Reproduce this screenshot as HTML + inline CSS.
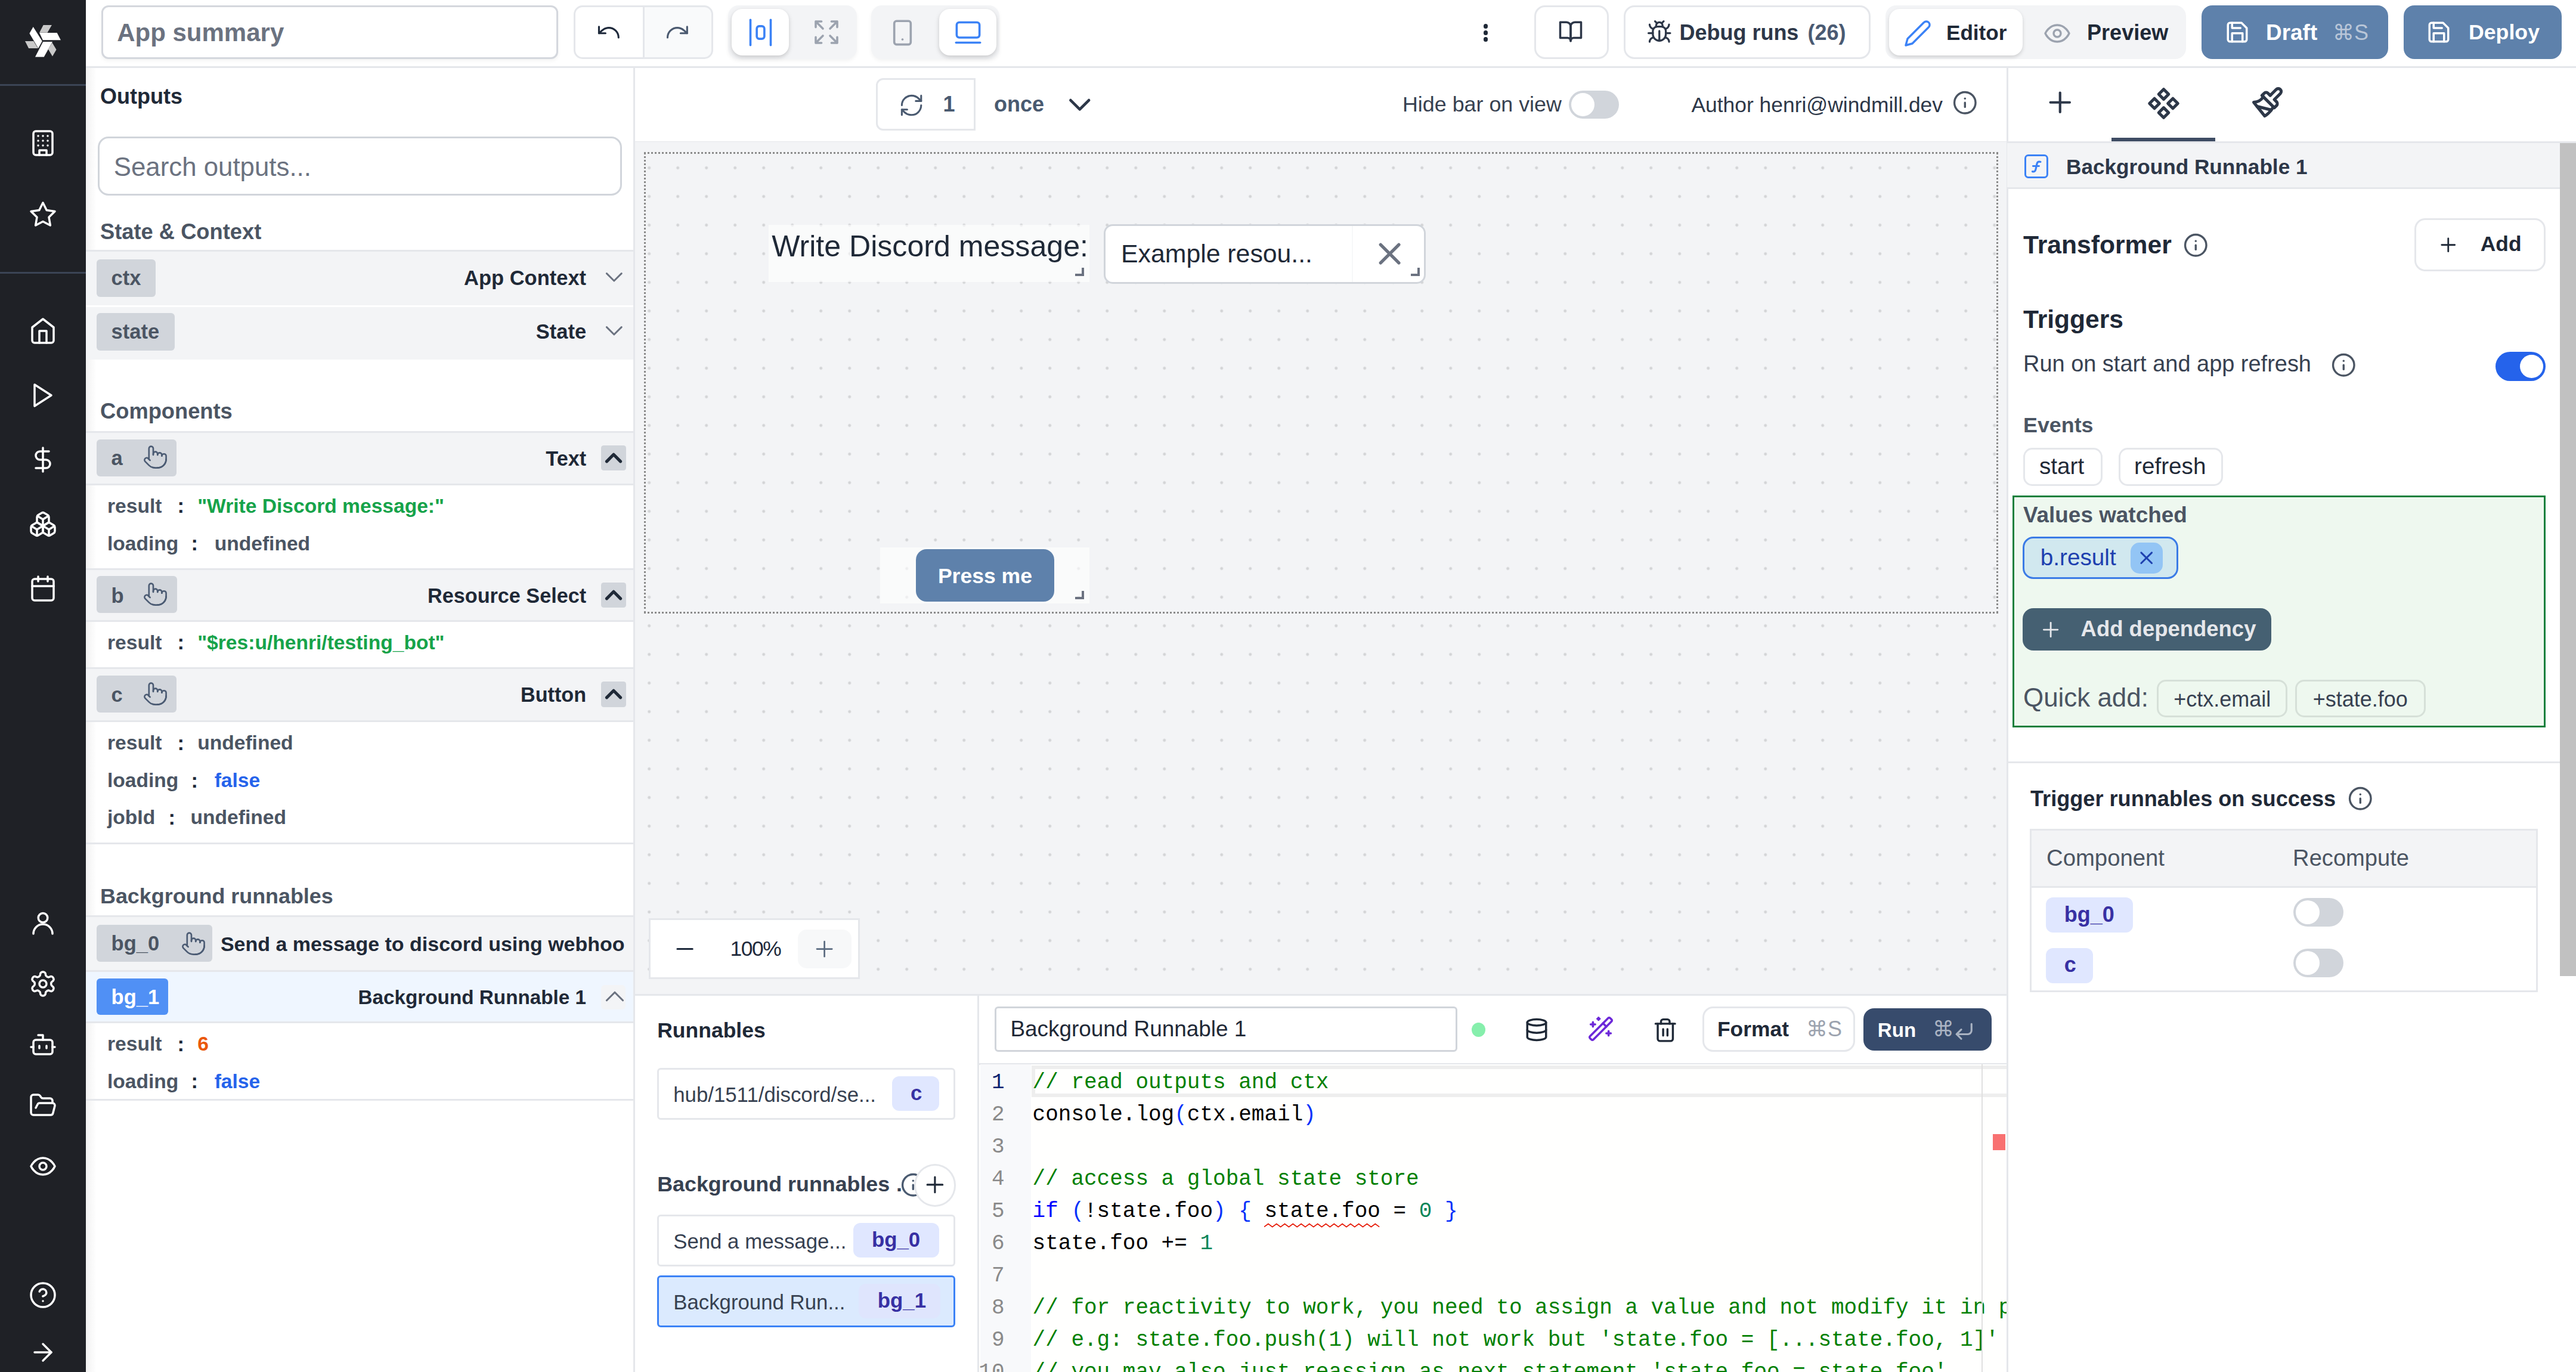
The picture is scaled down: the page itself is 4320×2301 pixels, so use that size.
<!DOCTYPE html>
<html><head><meta charset="utf-8">
<style>
html,body{margin:0;padding:0;background:#fff;overflow:hidden}
#root{position:relative;width:1440px;height:767px;zoom:3;overflow:hidden;font-family:"Liberation Sans",sans-serif;color:#1f2937;background:#fff}
.a{position:absolute}
.t{position:absolute;white-space:nowrap;line-height:1}
.b{font-weight:700}
svg.i{position:absolute;fill:none;stroke:currentColor;stroke-width:2;stroke-linecap:round;stroke-linejoin:round}
.mono{font-family:"Liberation Mono",monospace}
@media (max-width:2200px){#root{zoom:1}}
</style></head><body>
<div id="root">
<div class="a" style="left:0;top:0;width:48px;height:767px;background:#1f2126"></div>
<!-- logo -->
<svg class="a" style="left:0;top:0;width:48px;height:48px" viewBox="0 0 48 48">
 <polygon points="24.22,14.01 28.96,14.01 26.5,18.29 22.03,18.29" fill="#c9c9c9"/>
 <polygon points="22.03,18.35 31.87,18.35 33.97,22.39 23.94,22.39" fill="#fff"/>
 <polygon points="18.57,15.01 23.58,23.03 21.39,27.04 16.47,18.66" fill="#fff"/>
 <polygon points="14.01,23.03 18.75,23.03 21.21,27.04 16.02,27.04" fill="#c9c9c9"/>
 <polygon points="24.04,23.31 29.32,23.31 24.58,31.87 19.66,31.87" fill="#fff"/>
 <polygon points="29.14,23.85 31.51,27.77 29.32,31.51 26.95,27.5" fill="#c9c9c9"/>
</svg>
<div class="a" style="left:0;top:47px;width:48px;height:1px;background:#3b4455"></div>
<div class="a" style="left:0;top:152px;width:48px;height:1px;background:#3b4455"></div>
<svg class="i" style="left:16px;top:72px;width:16px;height:16px;color:#fff;stroke-width:1.75" viewBox="0 0 24 24"><rect width="16" height="20" x="4" y="2" rx="2" ry="2"/><path d="M9 22v-4h6v4"/><path d="M8 6h.01"/><path d="M16 6h.01"/><path d="M12 6h.01"/><path d="M12 10h.01"/><path d="M12 14h.01"/><path d="M16 10h.01"/><path d="M16 14h.01"/><path d="M8 10h.01"/><path d="M8 14h.01"/></svg>
<svg class="i" style="left:16px;top:112px;width:16px;height:16px;color:#fff;stroke-width:1.75" viewBox="0 0 24 24"><polygon points="12 2 15.09 8.26 22 9.27 17 14.14 18.18 21.02 12 17.77 5.82 21.02 7 14.14 2 9.27 8.91 8.26 12 2"/></svg>
<svg class="i" style="left:16px;top:177px;width:16px;height:16px;color:#fff;stroke-width:1.75" viewBox="0 0 24 24"><path d="m3 9 9-7 9 7v11a2 2 0 0 1-2 2H5a2 2 0 0 1-2-2z"/><polyline points="9 22 9 12 15 12 15 22"/></svg>
<svg class="i" style="left:16px;top:213px;width:16px;height:16px;color:#fff;stroke-width:1.75" viewBox="0 0 24 24"><polygon points="5 3 19 12 5 21 5 3"/></svg>
<svg class="i" style="left:16px;top:249px;width:16px;height:16px;color:#fff;stroke-width:1.75" viewBox="0 0 24 24"><line x1="12" x2="12" y1="2" y2="22"/><path d="M17 5H9.5a3.5 3.5 0 0 0 0 7h5a3.5 3.5 0 0 1 0 7H6"/></svg>
<svg class="i" style="left:16px;top:285px;width:16px;height:16px;color:#fff;stroke-width:1.75" viewBox="0 0 24 24"><path d="M2.97 12.92A2 2 0 0 0 2 14.63v3.24a2 2 0 0 0 .97 1.71l3 1.8a2 2 0 0 0 2.06 0L12 19v-5.5l-5-3-4.03 2.42Z"/><path d="m7 16.5-4.74-2.85"/><path d="m7 16.5 5-3"/><path d="M7 16.5v5.17"/><path d="M12 13.5V19l3.97 2.38a2 2 0 0 0 2.06 0l3-1.8a2 2 0 0 0 .97-1.71v-3.24a2 2 0 0 0-.97-1.71L17 10.5l-5 3Z"/><path d="m17 16.5-5-3"/><path d="m17 16.5 4.74-2.85"/><path d="M17 16.5v5.17"/><path d="M7.97 4.42A2 2 0 0 0 7 6.13v4.37l5 3 5-3V6.13a2 2 0 0 0-.97-1.71l-3-1.8a2 2 0 0 0-2.06 0l-3 1.8Z"/><path d="M12 8 7.26 5.15"/><path d="m12 8 4.74-2.85"/><path d="M12 13.5V8"/></svg>
<svg class="i" style="left:16px;top:321px;width:16px;height:16px;color:#fff;stroke-width:1.75" viewBox="0 0 24 24"><rect width="18" height="18" x="3" y="4" rx="2" ry="2"/><line x1="16" x2="16" y1="2" y2="6"/><line x1="8" x2="8" y1="2" y2="6"/><line x1="3" x2="21" y1="10" y2="10"/></svg>
<svg class="i" style="left:16px;top:508px;width:16px;height:16px;color:#fff;stroke-width:1.75" viewBox="0 0 24 24"><circle cx="12" cy="7.6" r="3.9"/><path d="M20 21a8 8 0 0 0-16 0"/></svg>
<svg class="i" style="left:16px;top:542px;width:16px;height:16px;color:#fff;stroke-width:1.75" viewBox="0 0 24 24"><path d="M12.22 2h-.44a2 2 0 0 0-2 2v.18a2 2 0 0 1-1 1.73l-.43.25a2 2 0 0 1-2 0l-.15-.08a2 2 0 0 0-2.73.73l-.22.38a2 2 0 0 0 .73 2.73l.15.1a2 2 0 0 1 1 1.72v.51a2 2 0 0 1-1 1.74l-.15.09a2 2 0 0 0-.73 2.73l.22.38a2 2 0 0 0 2.73.73l.15-.08a2 2 0 0 1 2 0l.43.25a2 2 0 0 1 1 1.73V20a2 2 0 0 0 2 2h.44a2 2 0 0 0 2-2v-.18a2 2 0 0 1 1-1.73l.43-.25a2 2 0 0 1 2 0l.15.08a2 2 0 0 0 2.73-.73l.22-.39a2 2 0 0 0-.73-2.73l-.15-.08a2 2 0 0 1-1-1.74v-.5a2 2 0 0 1 1-1.74l.15-.09a2 2 0 0 0 .73-2.73l-.22-.38a2 2 0 0 0-2.73-.73l-.15.08a2 2 0 0 1-2 0l-.43-.25a2 2 0 0 1-1-1.73V4a2 2 0 0 0-2-2z"/><circle cx="12" cy="12" r="3"/></svg>
<svg class="i" style="left:16px;top:576px;width:16px;height:16px;color:#fff;stroke-width:1.75" viewBox="0 0 24 24"><path d="M12 8V4H8"/><rect width="16" height="12" x="4" y="8" rx="2"/><path d="M2 14h2"/><path d="M20 14h2"/><path d="M15 13v2"/><path d="M9 13v2"/></svg>
<svg class="i" style="left:16px;top:610px;width:16px;height:16px;color:#fff;stroke-width:1.75" viewBox="0 0 24 24"><path d="m6 14 1.5-2.9A2 2 0 0 1 9.24 10H20a2 2 0 0 1 1.94 2.5l-1.54 6a2 2 0 0 1-1.95 1.5H4a2 2 0 0 1-2-2V5a2 2 0 0 1 2-2h3.9a2 2 0 0 1 1.69.9l.81 1.2a2 2 0 0 0 1.67.9H18a2 2 0 0 1 2 2v2"/></svg>
<svg class="i" style="left:16px;top:644px;width:16px;height:16px;color:#fff;stroke-width:1.75" viewBox="0 0 24 24"><path d="M2 12s3-7 10-7 10 7 10 7-3 7-10 7-10-7-10-7Z"/><circle cx="12" cy="12" r="3"/></svg>
<svg class="i" style="left:16px;top:716px;width:16px;height:16px;color:#fff;stroke-width:1.75" viewBox="0 0 24 24"><circle cx="12" cy="12" r="10"/><path d="M9.09 9a3 3 0 0 1 5.83 1c0 2-3 3-3 3"/><path d="M12 17h.01"/></svg>
<svg class="i" style="left:16px;top:748px;width:16px;height:16px;color:#fff;stroke-width:1.75" viewBox="0 0 24 24"><path d="M5 12h14"/><path d="m12 5 7 7-7 7"/></svg>

<div class="a" style="left:48px;top:0;width:1392px;height:37px;background:#fff;border-bottom:1px solid #e5e7eb"></div>
<!-- app summary -->
<div class="a" style="left:56.5px;top:3px;width:253.5px;height:28px;border:1px solid #d4d7dd;border-radius:4px;background:#fff;box-shadow:0 1px 2px rgba(0,0,0,.05)"></div>
<div class="t b" style="left:65.4px;top:11.3px;font-size:14px;color:#6b7280">App summary</div>
<!-- undo/redo -->
<div class="a" style="left:320.7px;top:3px;width:76px;height:28px;border:1px solid #e5e7eb;border-radius:5px;background:linear-gradient(90deg,#fff 50%,#f9fafb 50%)"></div>
<div class="a" style="left:359.3px;top:4px;width:1px;height:28px;background:#e5e7eb"></div>
<svg class="i" style="left:332.9px;top:10.7px;width:14.6px;height:14.6px;color:#1e293b;stroke-width:1.7" viewBox="0 0 24 24"><path d="M3 7v6h6"/><path d="M21 17a9 9 0 0 0-9-9 9 9 0 0 0-6 2.3L3 13"/></svg>
<svg class="i" style="left:371.4px;top:10.7px;width:14.6px;height:14.6px;color:#4b5a70;stroke-width:1.7" viewBox="0 0 24 24"><path d="M21 7v6h-6"/><path d="M3 17a9 9 0 0 1 9-9 9 9 0 0 1 6 2.3l3 2.7"/></svg>
<!-- layout toggle -->
<div class="a" style="left:407px;top:3px;width:72px;height:30px;border-radius:6px;background:#f3f4f6;box-shadow:0 1px 2px rgba(0,0,0,.05)"></div>
<div class="a" style="left:409px;top:5px;width:32px;height:26px;border-radius:6px;background:#fff;box-shadow:0 1px 3px rgba(0,0,0,.13),0 1px 2px rgba(0,0,0,.06)"></div>
<svg class="i" style="left:416.5px;top:9.5px;width:17px;height:17px;color:#3b82f6;stroke-width:1.7" viewBox="0 0 24 24"><rect width="6" height="10" x="9" y="7" rx="2"/><path d="M4 22V2"/><path d="M20 22V2"/></svg>
<svg class="i" style="left:454px;top:10px;width:16px;height:16px;color:#9ca3af;stroke-width:1.8" viewBox="0 0 24 24"><path d="m21 21-6-6m6 6v-4.8m0 4.8h-4.8"/><path d="M3 16.2V21m0 0h4.8M3 21l6-6"/><path d="M21 7.8V3m0 0h-4.8M21 3l-6 6"/><path d="M3 7.8V3m0 0h4.8M3 3l6 6"/></svg>
<!-- device toggle -->
<div class="a" style="left:487px;top:3px;width:71.5px;height:30px;border-radius:6px;background:#f3f4f6;box-shadow:0 1px 2px rgba(0,0,0,.05)"></div>
<div class="a" style="left:525px;top:5px;width:32px;height:26px;border-radius:6px;background:#fff;box-shadow:0 1px 3px rgba(0,0,0,.13),0 1px 2px rgba(0,0,0,.06)"></div>
<svg class="i" style="left:496px;top:10px;width:17px;height:17px;color:#9ca3af;stroke-width:1.7" viewBox="0 0 24 24"><rect width="13" height="18.5" x="5.5" y="2.5" rx="1.8" ry="1.8"/><path d="M12 17h.01"/></svg>
<svg class="i" style="left:532.5px;top:9.5px;width:17px;height:17px;color:#3b82f6;stroke-width:1.7" viewBox="0 0 24 24"><rect width="18" height="12" x="3" y="4" rx="2" ry="2"/><line x1="2.5" x2="21.5" y1="20" y2="20"/></svg>
<!-- kebab -->
<div class="a" style="left:829.2px;top:13.3px;width:2.6px;height:2.6px;border-radius:50%;background:#1f2937"></div>
<div class="a" style="left:829.2px;top:17px;width:2.6px;height:2.6px;border-radius:50%;background:#1f2937"></div>
<div class="a" style="left:829.2px;top:20.7px;width:2.6px;height:2.6px;border-radius:50%;background:#1f2937"></div>
<!-- book -->
<div class="a" style="left:857.7px;top:3px;width:39.5px;height:28px;border:1px solid #e5e7eb;border-radius:6px;background:#fff"></div>
<svg class="i" style="left:871px;top:10.6px;width:14px;height:14px;color:#2d3748;stroke-width:2" viewBox="0 0 24 24"><path d="M2 3h6a4 4 0 0 1 4 4v14a3 3 0 0 0-3-3H2z"/><path d="M22 3h-6a4 4 0 0 0-4 4v14a3 3 0 0 1 3-3h7z"/></svg>
<!-- debug runs -->
<div class="a" style="left:907.8px;top:3px;width:136px;height:28px;border:1px solid #e5e7eb;border-radius:6px;background:#fff"></div>
<svg class="i" style="left:920.3px;top:10.8px;width:14.5px;height:14.5px;color:#2d3748;stroke-width:1.8" viewBox="0 0 24 24"><path d="m8 2 1.88 1.88"/><path d="M14.12 3.88 16 2"/><path d="M9 7.13v-1a3.003 3.003 0 1 1 6 0v1"/><path d="M12 20c-3.3 0-6-2.7-6-6v-3a4 4 0 0 1 4-4h4a4 4 0 0 1 4 4v3c0 3.3-2.7 6-6 6"/><path d="M12 20v-9"/><path d="M6.53 9C4.6 8.8 3 7.1 3 5"/><path d="M6 13H2"/><path d="M3 21c0-2.1 1.7-3.9 3.8-4"/><path d="M20.97 5c0 2.1-1.6 3.8-3.5 4"/><path d="M22 13h-4"/><path d="M17.2 17c2.1.1 3.8 1.9 3.8 4"/></svg>
<div class="t b" style="left:938.8px;top:12.2px;font-size:12px;color:#2d3748">Debug runs</div>
<div class="t b" style="left:1010.5px;top:12.2px;font-size:12px;color:#4a5a72">(26)</div>
<!-- editor/preview -->
<div class="a" style="left:1054px;top:3px;width:168px;height:30px;border-radius:6px;background:#f3f4f6"></div>
<div class="a" style="left:1056px;top:5px;width:74.5px;height:26px;border-radius:6px;background:#fff;box-shadow:0 1px 2px rgba(0,0,0,.15)"></div>
<svg class="i" style="left:1064px;top:10.5px;width:16px;height:16px;color:#3b82f6;stroke-width:1.7" viewBox="0 0 24 24"><path d="M17 3a2.85 2.83 0 1 1 4 4L7.5 20.5 2 22l1.5-5.5Z"/></svg>
<div class="t b" style="left:1088px;top:12.4px;font-size:11.7px;color:#1f2937">Editor</div>
<svg class="i" style="left:1142px;top:10.5px;width:16px;height:16px;color:#9ca3af;stroke-width:1.7" viewBox="0 0 24 24"><path d="M2 12s3-7 10-7 10 7 10 7-3 7-10 7-10-7-10-7Z"/><circle cx="12" cy="12" r="3"/></svg>
<div class="t b" style="left:1166.7px;top:12.4px;font-size:12px;color:#1f2937">Preview</div>
<!-- draft -->
<div class="a" style="left:1230.5px;top:3px;width:104.5px;height:30px;border-radius:6px;background:#5e81ab"></div>
<svg class="i" style="left:1243.5px;top:11px;width:14px;height:14px;color:#fff;stroke-width:2" viewBox="0 0 24 24"><path d="M19 21H5a2 2 0 0 1-2-2V5a2 2 0 0 1 2-2h11l5 5v11a2 2 0 0 1-2 2z"/><polyline points="17 21 17 13 7 13 7 21"/><polyline points="7 3 7 8 15 8"/></svg>
<div class="t b" style="left:1266.7px;top:12.4px;font-size:12.3px;color:#fff">Draft</div>
<div class="t" style="left:1304px;top:12.4px;font-size:12px;color:#b9c6d8">&#8984;S</div>
<!-- deploy -->
<div class="a" style="left:1343.6px;top:3px;width:88.4px;height:30px;border-radius:6px;background:#5e81ab"></div>
<svg class="i" style="left:1356.2px;top:11px;width:14px;height:14px;color:#fff;stroke-width:2" viewBox="0 0 24 24"><path d="M19 21H5a2 2 0 0 1-2-2V5a2 2 0 0 1 2-2h11l5 5v11a2 2 0 0 1-2 2z"/><polyline points="17 21 17 13 7 13 7 21"/><polyline points="7 3 7 8 15 8"/></svg>
<div class="t b" style="left:1380px;top:12.4px;font-size:11.9px;color:#fff">Deploy</div>

<div class="a" style="left:48px;top:38px;width:306px;height:729px;background:#fff;border-right:1px solid #e5e7eb"></div>
<!-- left panel content -->
<div class="a" style="left:48.00px;top:38.00px;width:6.00px;height:729.00px;background:linear-gradient(90deg,rgba(0,0,0,.05),rgba(0,0,0,0))"></div>
<div class="t b" style="left:56.00px;top:47.84px;font-size:12px;color:#1f2937;">Outputs</div>
<div class="a" style="left:54.50px;top:76.30px;width:291.00px;height:31.20px;border:1px solid #d1d5db;border-radius:6px;background:#fff"></div>
<div class="t" style="left:63.60px;top:86.14px;font-size:14.6px;color:#6b7280;">Search outputs...</div>
<div class="t b" style="left:56.00px;top:123.76px;font-size:12.1px;color:#4b5563;">State &amp; Context</div>
<div class="a" style="left:48.00px;top:139.50px;width:306.00px;height:30.00px;background:#f3f4f6;border-top:1px solid #e5e7eb"></div>
<div class="a" style="left:48.00px;top:170.50px;width:306.00px;height:29.50px;background:#f3f4f6;border-top:1px solid #fff"></div>
<div class="a" style="left:54.00px;top:145.00px;width:33.00px;height:21.00px;background:#d1d5db;border-radius:2px"></div>
<div class="t b" style="left:62.20px;top:149.57px;font-size:11.5px;color:#4b5563;">ctx</div>
<div class="t b" style="right:1112.30px;top:149.57px;font-size:11.5px;color:#1f2937;">App Context</div>
<svg class="i" style="left:334.86px;top:146.79px;width:16.56px;height:16.56px;color:#6b7280;stroke-width:1.4" viewBox="0 0 24 24"><path d="m6 9 6 6 6-6"/></svg>
<div class="a" style="left:54.00px;top:175.00px;width:43.80px;height:21.00px;background:#d1d5db;border-radius:2px"></div>
<div class="t b" style="left:62.20px;top:179.57px;font-size:11.5px;color:#4b5563;">state</div>
<div class="t b" style="right:1112.30px;top:179.57px;font-size:11.5px;color:#1f2937;">State</div>
<svg class="i" style="left:334.86px;top:176.79px;width:16.56px;height:16.56px;color:#6b7280;stroke-width:1.4" viewBox="0 0 24 24"><path d="m6 9 6 6 6-6"/></svg>
<div class="t b" style="left:56.00px;top:224.06px;font-size:12.1px;color:#4b5563;">Components</div>
<div class="a" style="left:48.00px;top:240.90px;width:306.00px;height:30.60px;background:#f3f4f6;border-top:1px solid #e5e7eb;border-bottom:1px solid #e5e7eb;box-sizing:border-box"></div>
<div class="a" style="left:54.00px;top:245.50px;width:44.50px;height:20.70px;background:#d1d5db;border-radius:2px"></div>
<div class="t b" style="left:62.20px;top:250.47px;font-size:11.5px;color:#4b5563;">a</div>
<svg class="i" style="left:79.56px;top:248.40px;width:14.40px;height:14.40px;color:#4b5b73;stroke-width:1.45" viewBox="0 0 24 24"><path d="M22 14a8 8 0 0 1-8 8"/><path d="M18 11v-1a2 2 0 0 0-2-2a2 2 0 0 0-2 2"/><path d="M14 10V9a2 2 0 0 0-2-2a2 2 0 0 0-2 2v1"/><path d="M10 9.5V4a2 2 0 0 0-2-2a2 2 0 0 0-2 2v10"/><path d="M18 11a2 2 0 1 1 4 0v3a8 8 0 0 1-8 8h-2c-2.8 0-4.5-.86-5.99-2.34l-3.6-3.6a2 2 0 0 1 2.83-2.82L7 15"/></svg>
<div class="t b" style="right:1112.30px;top:250.55px;font-size:11.4px;color:#1f2937;">Text</div>
<div class="a" style="left:336.00px;top:249.00px;width:14.00px;height:14.10px;background:#d1d5db;border-radius:1.5px"></div>
<svg class="i" style="left:335.3px;top:248.30px;width:15.36px;height:15.36px;color:#1f2937;stroke-width:2.7" viewBox="0 0 24 24"><path d="m18 15-6-6-6 6"/></svg>
<div class="t b" style="left:60.00px;top:277.32px;font-size:11.2px;color:#4b5563;">result</div>
<div class="t b" style="left:99.20px;top:277.07px;font-size:11.5px;color:#1f2937;">:</div>
<div class="t b" style="left:110.40px;top:277.32px;font-size:11.2px;color:#16a34a;">"Write Discord message:"</div>
<div class="t b" style="left:60.00px;top:298.22px;font-size:11.2px;color:#4b5563;">loading</div>
<div class="t b" style="left:106.80px;top:297.97px;font-size:11.5px;color:#1f2937;">:</div>
<div class="t b" style="left:119.90px;top:298.22px;font-size:11.2px;color:#4b5563;">undefined</div>
<div class="a" style="left:48.00px;top:317.50px;width:306.00px;height:30.10px;background:#f3f4f6;border-top:1px solid #e5e7eb;border-bottom:1px solid #e5e7eb;box-sizing:border-box"></div>
<div class="a" style="left:54.00px;top:322.10px;width:44.90px;height:20.70px;background:#d1d5db;border-radius:2px"></div>
<div class="t b" style="left:62.20px;top:327.27px;font-size:11.5px;color:#4b5563;">b</div>
<svg class="i" style="left:79.56px;top:325.00px;width:14.40px;height:14.40px;color:#4b5b73;stroke-width:1.45" viewBox="0 0 24 24"><path d="M22 14a8 8 0 0 1-8 8"/><path d="M18 11v-1a2 2 0 0 0-2-2a2 2 0 0 0-2 2"/><path d="M14 10V9a2 2 0 0 0-2-2a2 2 0 0 0-2 2v1"/><path d="M10 9.5V4a2 2 0 0 0-2-2a2 2 0 0 0-2 2v10"/><path d="M18 11a2 2 0 1 1 4 0v3a8 8 0 0 1-8 8h-2c-2.8 0-4.5-.86-5.99-2.34l-3.6-3.6a2 2 0 0 1 2.83-2.82L7 15"/></svg>
<div class="t b" style="right:1112.30px;top:327.35px;font-size:11.4px;color:#1f2937;">Resource Select</div>
<div class="a" style="left:336.00px;top:325.60px;width:14.00px;height:14.10px;background:#d1d5db;border-radius:1.5px"></div>
<svg class="i" style="left:335.3px;top:324.90px;width:15.36px;height:15.36px;color:#1f2937;stroke-width:2.7" viewBox="0 0 24 24"><path d="m18 15-6-6-6 6"/></svg>
<div class="t b" style="left:60.00px;top:353.52px;font-size:11.2px;color:#4b5563;">result</div>
<div class="t b" style="left:99.20px;top:353.27px;font-size:11.5px;color:#1f2937;">:</div>
<div class="t b" style="left:110.40px;top:353.52px;font-size:11.2px;color:#16a34a;">"$res:u/henri/testing_bot"</div>
<div class="a" style="left:48.00px;top:373.00px;width:306.00px;height:30.80px;background:#f3f4f6;border-top:1px solid #e5e7eb;border-bottom:1px solid #e5e7eb;box-sizing:border-box"></div>
<div class="a" style="left:54.00px;top:377.60px;width:44.50px;height:20.70px;background:#d1d5db;border-radius:2px"></div>
<div class="t b" style="left:62.20px;top:382.67px;font-size:11.5px;color:#4b5563;">c</div>
<svg class="i" style="left:79.56px;top:380.50px;width:14.40px;height:14.40px;color:#4b5b73;stroke-width:1.45" viewBox="0 0 24 24"><path d="M22 14a8 8 0 0 1-8 8"/><path d="M18 11v-1a2 2 0 0 0-2-2a2 2 0 0 0-2 2"/><path d="M14 10V9a2 2 0 0 0-2-2a2 2 0 0 0-2 2v1"/><path d="M10 9.5V4a2 2 0 0 0-2-2a2 2 0 0 0-2 2v10"/><path d="M18 11a2 2 0 1 1 4 0v3a8 8 0 0 1-8 8h-2c-2.8 0-4.5-.86-5.99-2.34l-3.6-3.6a2 2 0 0 1 2.83-2.82L7 15"/></svg>
<div class="t b" style="right:1112.30px;top:382.75px;font-size:11.4px;color:#1f2937;">Button</div>
<div class="a" style="left:336.00px;top:381.10px;width:14.00px;height:14.10px;background:#d1d5db;border-radius:1.5px"></div>
<svg class="i" style="left:335.3px;top:380.40px;width:15.36px;height:15.36px;color:#1f2937;stroke-width:2.7" viewBox="0 0 24 24"><path d="m18 15-6-6-6 6"/></svg>
<div class="t b" style="left:60.00px;top:409.82px;font-size:11.2px;color:#4b5563;">result</div>
<div class="t b" style="left:99.20px;top:409.57px;font-size:11.5px;color:#1f2937;">:</div>
<div class="t b" style="left:110.40px;top:409.82px;font-size:11.2px;color:#4b5563;">undefined</div>
<div class="t b" style="left:60.00px;top:430.82px;font-size:11.2px;color:#4b5563;">loading</div>
<div class="t b" style="left:106.80px;top:430.57px;font-size:11.5px;color:#1f2937;">:</div>
<div class="t b" style="left:119.90px;top:430.82px;font-size:11.2px;color:#2563eb;">false</div>
<div class="t b" style="left:60.00px;top:451.42px;font-size:11.2px;color:#4b5563;">jobId</div>
<div class="t b" style="left:94.20px;top:451.17px;font-size:11.5px;color:#1f2937;">:</div>
<div class="t b" style="left:106.50px;top:451.42px;font-size:11.2px;color:#4b5563;">undefined</div>
<div class="a" style="left:48.00px;top:471.00px;width:306.00px;height:1.00px;background:#e5e7eb"></div>
<div class="t b" style="left:56.00px;top:495.48px;font-size:11.96px;color:#4b5563;">Background runnables</div>
<div class="a" style="left:48.00px;top:511.80px;width:306.00px;height:30.40px;background:#f3f4f6;border-top:1px solid #e5e7eb;box-sizing:border-box"></div>
<div class="a" style="left:54.00px;top:517.00px;width:64.80px;height:20.70px;background:#d1d5db;border-radius:2px"></div>
<div class="t b" style="left:62.20px;top:521.77px;font-size:11.5px;color:#4b5563;">bg_0</div>
<svg class="i" style="left:100.96px;top:520.20px;width:14.40px;height:14.40px;color:#4b5b73;stroke-width:1.45" viewBox="0 0 24 24"><path d="M22 14a8 8 0 0 1-8 8"/><path d="M18 11v-1a2 2 0 0 0-2-2a2 2 0 0 0-2 2"/><path d="M14 10V9a2 2 0 0 0-2-2a2 2 0 0 0-2 2v1"/><path d="M10 9.5V4a2 2 0 0 0-2-2a2 2 0 0 0-2 2v10"/><path d="M18 11a2 2 0 1 1 4 0v3a8 8 0 0 1-8 8h-2c-2.8 0-4.5-.86-5.99-2.34l-3.6-3.6a2 2 0 0 1 2.83-2.82L7 15"/></svg>
<div class="a" style="left:123.3px;top:511px;width:226px;height:30px;overflow:hidden"><div class="t b" style="left:0.00px;top:10.91px;font-size:11.33px;color:#1f2937;">Send a message to discord using webhook</div>
</div>
<div class="a" style="left:48.00px;top:542.20px;width:306.00px;height:29.80px;background:#eff6ff;border-top:1px solid #e5e7eb;border-bottom:1px solid #e5e7eb;box-sizing:border-box"></div>
<div class="a" style="left:54.00px;top:546.90px;width:39.90px;height:20.50px;background:#5090f5;border-radius:2px"></div>
<div class="t b" style="left:62.20px;top:551.77px;font-size:11.5px;color:#fff;">bg_1</div>
<div class="t b" style="right:1112.30px;top:552.11px;font-size:11.09px;color:#1f2937;">Background Runnable 1</div>
<div class="a" style="left:336.00px;top:550.50px;width:13.80px;height:13.70px;background:#f3f4f6;border-radius:2px"></div>
<svg class="i" style="left:334.80px;top:547.85px;width:18.00px;height:18.00px;color:#6b7280;stroke-width:1.4" viewBox="0 0 24 24"><path d="m18 15-6-6-6 6"/></svg>
<div class="t b" style="left:60.00px;top:578.12px;font-size:11.2px;color:#4b5563;">result</div>
<div class="t b" style="left:99.20px;top:577.87px;font-size:11.5px;color:#1f2937;">:</div>
<div class="t b" style="left:110.40px;top:578.12px;font-size:11.2px;color:#ea580c;">6</div>
<div class="t b" style="left:60.00px;top:599.02px;font-size:11.2px;color:#4b5563;">loading</div>
<div class="t b" style="left:106.80px;top:598.77px;font-size:11.5px;color:#1f2937;">:</div>
<div class="t b" style="left:119.90px;top:599.02px;font-size:11.2px;color:#2563eb;">false</div>
<div class="a" style="left:48.00px;top:614.30px;width:306.00px;height:1.00px;background:#e5e7eb"></div>
<!-- ============ CENTER ============ -->
<div class="a" style="left:355.00px;top:38.00px;width:767.00px;height:41.00px;background:#fff;border-bottom:1px solid #e5e7eb"></div>
<div class="a" style="left:489.60px;top:43.70px;width:55.80px;height:29.30px;border:1px solid #e5e7eb;border-radius:4px 0 0 4px;box-sizing:border-box;background:#fff"></div>
<svg class="i" style="left:502.30px;top:51.50px;width:14.40px;height:14.40px;color:#4a5a70;stroke-width:1.7;" viewBox="0 0 24 24"><path d="M3 12a9 9 0 0 1 9-9 9.75 9.75 0 0 1 6.74 2.74L21 8"/><path d="M21 3v5h-5"/><path d="M21 12a9 9 0 0 1-9 9 9.75 9.75 0 0 1-6.74-2.74L3 16"/><path d="M8 16H3v5"/></svg>
<div class="t b" style="left:527.20px;top:52.34px;font-size:12px;color:#4a5a70;">1</div>
<div class="t b" style="left:555.70px;top:52.34px;font-size:12px;color:#4a5a70;">once</div>
<svg class="i" style="left:593.20px;top:48.20px;width:20.50px;height:20.50px;color:#2d3748;stroke-width:1.8;" viewBox="0 0 24 24"><path d="m6 9 6 6 6-6"/></svg>
<div class="t" style="left:784.00px;top:52.78px;font-size:11.95px;color:#374151;">Hide bar on view</div>
<div class="a" style="left:877.00px;top:50.60px;width:28.00px;height:15.80px;background:#d1d5db;border-radius:8px"></div>
<div class="a" style="left:878.30px;top:51.90px;width:13.20px;height:13.20px;background:#fff;border-radius:50%;box-shadow:0 0 0 0.3px #d1d5db"></div>
<div class="t" style="left:945.50px;top:52.91px;font-size:11.8px;color:#2d3748;">Author henri@windmill.dev</div>
<svg class="i" style="left:1091.40px;top:50.40px;width:14.20px;height:14.20px;color:#4b5563;stroke-width:1.9;" viewBox="0 0 24 24"><circle cx="12" cy="12" r="10"/><path d="M12 16v-4"/><path d="M12 8h.01"/></svg>
<div class="a" style="left:355.00px;top:79.40px;width:767.00px;height:476.60px;background-color:#f3f4f6;background-image:radial-gradient(circle at 8px 8px,#d3d4d6 0.65px,rgba(0,0,0,0) 1.0px);background-size:16px 16px;background-position:-0.1px 6.5px"></div>
<div class="a" style="left:360.00px;top:85.00px;width:757.00px;height:258.00px;border:1px dotted #8a8a8a;box-sizing:border-box"></div>
<div class="a" style="left:429.70px;top:125.80px;width:179.30px;height:31.90px;background:rgba(255,255,255,0.6)"></div>
<div class="t" style="right:831.70px;top:129.36px;font-size:16.7px;color:#1f2937;">Write Discord message:</div>
<div class="a" style="left:604.60px;top:149.80px;width:1.40px;height:4.70px;background:#6b7280"></div>
<div class="a" style="left:601.00px;top:153.10px;width:5.00px;height:1.40px;background:#6b7280"></div>
<div class="a" style="left:617.00px;top:125.30px;width:180.00px;height:33.30px;border:1px solid #d1d5db;border-radius:5px;background:#fff;box-sizing:border-box"></div>
<div class="t" style="left:626.70px;top:134.73px;font-size:14.26px;color:#1f2937;">Example resou...</div>
<div class="a" style="left:755.80px;top:126.30px;width:0.40px;height:31.30px;background:#f7f8f9"></div>
<svg class="i" style="left:766.55px;top:131.70px;width:20.40px;height:20.40px;color:#6b7280;stroke-width:2.1;" viewBox="0 0 24 24"><path d="M18 6 6 18"/><path d="m6 6 12 12"/></svg>
<div class="a" style="left:792.40px;top:149.80px;width:1.40px;height:4.70px;background:#6b7280"></div>
<div class="a" style="left:788.80px;top:153.10px;width:5.00px;height:1.40px;background:#6b7280"></div>
<div class="a" style="left:492.00px;top:305.90px;width:117.00px;height:31.60px;background:rgba(255,255,255,0.6)"></div>
<div class="a" style="left:512.00px;top:306.90px;width:77.40px;height:29.60px;background:#5e81ab;border-radius:6px"></div>
<div class="t b" style="left:524.30px;top:316.27px;font-size:11.85px;color:#fff;">Press me</div>
<div class="a" style="left:604.60px;top:330.20px;width:1.40px;height:4.70px;background:#6b7280"></div>
<div class="a" style="left:601.00px;top:333.50px;width:5.00px;height:1.40px;background:#6b7280"></div>
<div class="a" style="left:362.70px;top:513.40px;width:117.90px;height:34.10px;background:#fff;border:1px solid #e5e7eb;box-sizing:border-box"></div>
<svg class="i" style="left:375.60px;top:523.20px;width:14.40px;height:14.40px;color:#1f2a3c;stroke-width:1.7;" viewBox="0 0 24 24"><path d="M5 12h14"/></svg>
<div class="t" style="left:408.20px;top:524.71px;font-size:11.8px;color:#1f2a3c;letter-spacing:-0.5px">100%</div>
<div class="a" style="left:446.00px;top:519.50px;width:30.00px;height:21.80px;background:#f7f8f9;border-radius:5px"></div>
<svg class="i" style="left:453.80px;top:523.20px;width:14.40px;height:14.40px;color:#5b6b80;stroke-width:1.5;" viewBox="0 0 24 24"><path d="M5 12h14"/><path d="M12 5v14"/></svg>
<div class="a" style="left:355.00px;top:555.60px;width:767.00px;height:211.40px;background:#fff;border-top:1px solid #e5e7eb;box-sizing:border-box"></div>
<div class="a" style="left:546.30px;top:556.00px;width:1.00px;height:211.00px;background:#e5e7eb"></div>
<div class="t b" style="left:367.40px;top:570.38px;font-size:11.84px;color:#1f2937;">Runnables</div>
<div class="a" style="left:367.40px;top:597.00px;width:166.60px;height:29.00px;background:#fff;border:1px solid #e5e7eb;border-radius:2px;box-sizing:border-box"></div>
<div class="t" style="left:376.40px;top:606.48px;font-size:11.6px;color:#374151;">hub/1511/discord/se...</div>
<div class="a" style="left:498.50px;top:601.60px;width:26.50px;height:19.50px;background:#e0e7ff;border-radius:4px"></div>
<div class="t b" style="left:509.00px;top:605.48px;font-size:11.6px;color:#3730a3;">c</div>
<div class="t b" style="left:367.40px;top:656.29px;font-size:11.94px;color:#374151;">Background runnables</div>
<div class="t b" style="left:501.00px;top:656.29px;font-size:11.94px;color:#374151;">.</div>
<svg class="i" style="left:503.30px;top:655.40px;width:14.20px;height:14.20px;color:#4a5a70;stroke-width:1.9;" viewBox="0 0 24 24"><circle cx="12" cy="12" r="10"/><path d="M12 16v-4"/><path d="M12 8h.01"/></svg>
<div class="a" style="left:510.90px;top:650.50px;width:23.60px;height:24.00px;background:#fff;border:1px solid #e5e7eb;border-radius:50%;box-sizing:border-box"></div>
<svg class="i" style="left:515.20px;top:655.10px;width:14.60px;height:14.60px;color:#1f2937;stroke-width:1.7;" viewBox="0 0 24 24"><path d="M5 12h14"/><path d="M12 5v14"/></svg>
<div class="a" style="left:367.40px;top:679.00px;width:166.60px;height:28.90px;background:#fff;border:1px solid #e5e7eb;border-radius:2px;box-sizing:border-box"></div>
<div class="t" style="left:376.40px;top:688.48px;font-size:11.6px;color:#374151;">Send a message...</div>
<div class="a" style="left:477.00px;top:683.60px;width:48.00px;height:19.50px;background:#e0e7ff;border-radius:4px"></div>
<div class="t b" style="left:487.30px;top:687.48px;font-size:11.6px;color:#3730a3;">bg_0</div>
<div class="a" style="left:367.40px;top:713.00px;width:166.60px;height:29.00px;background:#dbeafe;border:1px solid #3b82f6;border-radius:2px;box-sizing:border-box"></div>
<div class="t" style="left:376.40px;top:722.48px;font-size:11.6px;color:#374151;">Background Run...</div>
<div class="a" style="left:480.00px;top:717.60px;width:45.60px;height:19.50px;background:#e0e7ff;border-radius:4px;background:#dfe5fd"></div>
<div class="t b" style="left:490.60px;top:721.48px;font-size:11.6px;color:#3730a3;">bg_1</div>
<div class="a" style="left:556.00px;top:562.70px;width:258.50px;height:25.30px;border:1px solid #d1d5db;border-radius:2px;box-sizing:border-box;background:#fff"></div>
<div class="t" style="left:564.80px;top:569.19px;font-size:12.3px;color:#1f2937;">Background Runnable 1</div>
<div class="a" style="left:822.80px;top:571.60px;width:7.70px;height:8.00px;background:#86efac;border-radius:50%"></div>
<svg class="i" style="left:852.00px;top:568.60px;width:14.00px;height:14.00px;color:#1f2937;stroke-width:2;" viewBox="0 0 24 24"><ellipse cx="12" cy="5" rx="9" ry="3"/><path d="M3 5V19A9 3 0 0 0 21 19V5"/><path d="M3 12A9 3 0 0 0 21 12"/></svg>
<svg class="i" style="left:887.20px;top:567.80px;width:15.00px;height:15.00px;color:#6d28d9;stroke-width:1.9;" viewBox="0 0 24 24"><path d="m21.64 3.64-1.28-1.28a1.21 1.21 0 0 0-1.72 0L2.36 18.64a1.21 1.21 0 0 0 0 1.72l1.28 1.28a1.2 1.2 0 0 0 1.72 0L21.64 5.36a1.2 1.2 0 0 0 0-1.72Z"/><path d="m14 7 3 3"/><path d="M5 6v4"/><path d="M19 14v4"/><path d="M10 2v2"/><path d="M7 8H3"/><path d="M21 16h-4"/><path d="M11 3H9"/></svg>
<svg class="i" style="left:923.60px;top:568.60px;width:14.50px;height:14.50px;color:#1f2937;stroke-width:1.9;" viewBox="0 0 24 24"><path d="M3 6h18"/><path d="M19 6v14c0 1-1 2-2 2H7c-1 0-2-1-2-2V6"/><path d="M8 6V4c0-1 1-2 2-2h4c1 0 2 1 2 2v2"/><line x1="10" x2="10" y1="11" y2="17"/><line x1="14" x2="14" y1="11" y2="17"/></svg>
<div class="a" style="left:951.50px;top:562.70px;width:85.50px;height:25.30px;border:1px solid #e5e7eb;border-radius:6px;box-sizing:border-box;background:#fff"></div>
<div class="t b" style="left:960.00px;top:569.61px;font-size:11.8px;color:#1f2937;">Format</div>
<div class="t" style="left:1009.70px;top:569.44px;font-size:12px;color:#9ca3af;">&#8984;S</div>
<div class="a" style="left:1041.50px;top:563.50px;width:71.80px;height:23.80px;background:#374b6c;border-radius:6px"></div>
<div class="t b" style="left:1049.60px;top:570.24px;font-size:11.06px;color:#fff;">Run</div>
<div class="t" style="left:1080.40px;top:569.44px;font-size:12px;color:#aab3c2;">&#8984;</div>
<svg class="i" style="left:1091.50px;top:570.20px;width:12.50px;height:12.50px;color:#aab3c2;stroke-width:2;" viewBox="0 0 24 24"><polyline points="9 10 4 15 9 20"/><path d="M20 4v7a4 4 0 0 1-4 4H4"/></svg>
<div class="a" style="left:547.30px;top:594.40px;width:574.70px;height:1.00px;background:#e5e7eb"></div>
<div class="a" style="left:548.00px;top:595.00px;width:574.00px;height:172.00px;background:#fffffe"></div>
<div class="a" style="left:548.00px;top:595.00px;width:28.40px;height:172.00px;background:#f8f9fb"></div>
<div class="a" style="left:576.50px;top:595.60px;width:546.50px;height:17.80px;border:2px solid #eeeeee;border-right:none;box-sizing:border-box"></div>
<div class="a" style="left:576.4px;top:595px;width:545.6px;height:172px;overflow:hidden">
<div class="mono" style="position:absolute;left:0.8px;top:1.30px;height:18px;line-height:18px;font-size:12px;white-space:nowrap"><span style="color:#008000">//&nbsp;read&nbsp;outputs&nbsp;and&nbsp;ctx</span></div>
<div class="mono" style="position:absolute;left:0.8px;top:19.30px;height:18px;line-height:18px;font-size:12px;white-space:nowrap"><span style="color:#000">console.log</span><span style="color:#0431fa">(</span><span style="color:#000">ctx.email</span><span style="color:#0431fa">)</span></div>
<div class="mono" style="position:absolute;left:0.8px;top:37.30px;height:18px;line-height:18px;font-size:12px;white-space:nowrap"></div>
<div class="mono" style="position:absolute;left:0.8px;top:55.30px;height:18px;line-height:18px;font-size:12px;white-space:nowrap"><span style="color:#008000">//&nbsp;access&nbsp;a&nbsp;global&nbsp;state&nbsp;store</span></div>
<div class="mono" style="position:absolute;left:0.8px;top:73.30px;height:18px;line-height:18px;font-size:12px;white-space:nowrap"><span style="color:#0000ff">if</span><span style="color:#000">&nbsp;</span><span style="color:#0431fa">(</span><span style="color:#000">!state.foo</span><span style="color:#0431fa">)</span><span style="color:#000">&nbsp;</span><span style="color:#0431fa">{</span><span style="color:#000">&nbsp;state.foo&nbsp;=&nbsp;</span><span style="color:#098658">0</span><span style="color:#000">&nbsp;</span><span style="color:#0431fa">}</span></div>
<div class="mono" style="position:absolute;left:0.8px;top:91.30px;height:18px;line-height:18px;font-size:12px;white-space:nowrap"><span style="color:#000">state.foo&nbsp;+=&nbsp;</span><span style="color:#098658">1</span></div>
<div class="mono" style="position:absolute;left:0.8px;top:109.30px;height:18px;line-height:18px;font-size:12px;white-space:nowrap"></div>
<div class="mono" style="position:absolute;left:0.8px;top:127.30px;height:18px;line-height:18px;font-size:12px;white-space:nowrap"><span style="color:#008000">//&nbsp;for&nbsp;reactivity&nbsp;to&nbsp;work,&nbsp;you&nbsp;need&nbsp;to&nbsp;assign&nbsp;a&nbsp;value&nbsp;and&nbsp;not&nbsp;modify&nbsp;it&nbsp;in&nbsp;place</span></div>
<div class="mono" style="position:absolute;left:0.8px;top:145.30px;height:18px;line-height:18px;font-size:12px;white-space:nowrap"><span style="color:#008000">//&nbsp;e.g:&nbsp;state.foo.push(1)&nbsp;will&nbsp;not&nbsp;work&nbsp;but&nbsp;'state.foo&nbsp;=&nbsp;[...state.foo,&nbsp;1]'&nbsp;will.</span></div>
<div class="mono" style="position:absolute;left:0.8px;top:163.30px;height:18px;line-height:18px;font-size:12px;white-space:nowrap"><span style="color:#008000">//&nbsp;you&nbsp;may&nbsp;also&nbsp;just&nbsp;reassign&nbsp;as&nbsp;next&nbsp;statement&nbsp;'state.foo&nbsp;=&nbsp;state.foo'</span></div>
</div>
<div class="mono" style="position:absolute;right:878.50px;top:596.30px;height:18px;line-height:18px;font-size:12px;color:#0b216f;white-space:nowrap">1</div>
<div class="mono" style="position:absolute;right:878.50px;top:614.30px;height:18px;line-height:18px;font-size:12px;color:#8a8a8a;white-space:nowrap">2</div>
<div class="mono" style="position:absolute;right:878.50px;top:632.30px;height:18px;line-height:18px;font-size:12px;color:#8a8a8a;white-space:nowrap">3</div>
<div class="mono" style="position:absolute;right:878.50px;top:650.30px;height:18px;line-height:18px;font-size:12px;color:#8a8a8a;white-space:nowrap">4</div>
<div class="mono" style="position:absolute;right:878.50px;top:668.30px;height:18px;line-height:18px;font-size:12px;color:#8a8a8a;white-space:nowrap">5</div>
<div class="mono" style="position:absolute;right:878.50px;top:686.30px;height:18px;line-height:18px;font-size:12px;color:#8a8a8a;white-space:nowrap">6</div>
<div class="mono" style="position:absolute;right:878.50px;top:704.30px;height:18px;line-height:18px;font-size:12px;color:#8a8a8a;white-space:nowrap">7</div>
<div class="mono" style="position:absolute;right:878.50px;top:722.30px;height:18px;line-height:18px;font-size:12px;color:#8a8a8a;white-space:nowrap">8</div>
<div class="mono" style="position:absolute;right:878.50px;top:740.30px;height:18px;line-height:18px;font-size:12px;color:#8a8a8a;white-space:nowrap">9</div>
<div class="mono" style="position:absolute;right:878.50px;top:758.30px;height:18px;line-height:18px;font-size:12px;color:#8a8a8a;white-space:nowrap">10</div>
<div class="a" style="left:1107.70px;top:595.00px;width:0.50px;height:172.00px;background:#e0e0e0"></div>
<div class="a" style="left:1114.00px;top:634.00px;width:7.00px;height:9.00px;background:#f87171"></div>
<svg class="a" style="left:706.80px;top:683.50px;width:64.80px;height:3px" viewBox="0 0 64.80 3"><path d="M0 2.2 L2.30 0.5 L4.60 2.2 L6.90 0.5 L9.20 2.2 L11.50 0.5 L13.80 2.2 L16.10 0.5 L18.40 2.2 L20.70 0.5 L23.00 2.2 L25.30 0.5 L27.60 2.2 L29.90 0.5 L32.20 2.2 L34.50 0.5 L36.80 2.2 L39.10 0.5 L41.40 2.2 L43.70 0.5 L46.00 2.2 L48.30 0.5 L50.60 2.2 L52.90 0.5 L55.20 2.2 L57.50 0.5 L59.80 2.2 L62.10 0.5 L64.40 2.2" fill="none" stroke="#e51400" stroke-width="0.55"/></svg>
<!-- ============ RIGHT ============ -->
<div class="a" style="left:1122.00px;top:38.00px;width:318.00px;height:729.00px;background:#fff"></div>
<div class="a" style="left:1121.50px;top:38.00px;width:1.00px;height:729.00px;background:#e5e7eb"></div>
<div class="a" style="left:1122.00px;top:79.00px;width:318.00px;height:1.00px;background:#e5e7eb"></div>
<svg class="i" style="left:1142.20px;top:48.10px;width:18.50px;height:18.50px;color:#2d3748;stroke-width:1.8;" viewBox="0 0 24 24"><path d="M5 12h14"/><path d="M12 5v14"/></svg>
<svg class="i" style="left:1200.00px;top:48.20px;width:19.00px;height:19.00px;color:#2d3748;stroke-width:2.1;" viewBox="0 0 24 24"><path d="M5.5 8.5 9 12l-3.5 3.5L2 12l3.5-3.5Z"/><path d="m12 2 3.5 3.5L12 9 8.5 5.5 12 2Z"/><path d="M18.5 8.5 22 12l-3.5 3.5L15 12l3.5-3.5Z"/><path d="m12 15 3.5 3.5L12 22l-3.5-3.5L12 15Z"/></svg>
<svg class="i" style="left:1258.20px;top:48.10px;width:18.40px;height:18.40px;color:#2d3748;stroke-width:2.2;" viewBox="0 0 24 24"><path d="M18.37 2.63 14 7l-1.59-1.59a2 2 0 0 0-2.82 0L8 7l9 9 1.59-1.59a2 2 0 0 0 0-2.82L17 10l4.37-4.37a2.12 2.12 0 1 0-3-3Z"/><path d="M9 8c-2 3-4 3.5-7 4l8 10c2-1 6-5 6-7"/><path d="M14.5 17.5 4.5 15"/></svg>
<div class="a" style="left:1180.40px;top:77.00px;width:57.90px;height:2.00px;background:#3e4c63"></div>
<div class="a" style="left:1122.00px;top:80.00px;width:309.00px;height:25.80px;background:#f3f4f6;border-bottom:1px solid #e5e7eb;box-sizing:border-box"></div>
<svg class="a" style="left:1131.7px;top:86.3px;width:13.3px;height:13.3px" viewBox="0 0 40 40"><rect x="1.5" y="1.5" width="37" height="37" rx="5" fill="none" stroke="#3b82f6" stroke-width="3"/><path d="M27 12.5c-3-1-5.5 0-6 3.5l-2 9c-.6 3-2.5 4.5-5.5 3.8" fill="none" stroke="#3b82f6" stroke-width="3.2" stroke-linecap="round"/><path d="M14.5 19.5h10" stroke="#3b82f6" stroke-width="3" stroke-linecap="round"/></svg>
<div class="t b" style="left:1155.00px;top:87.27px;font-size:11.73px;color:#2d3748;">Background Runnable 1</div>
<div class="a" style="left:1431.00px;top:80.00px;width:9.00px;height:465.60px;background:#c1c1c1"></div>
<div class="t b" style="left:1131.00px;top:129.77px;font-size:14.21px;color:#1f2937;">Transformer</div>
<svg class="i" style="left:1220.40px;top:130.00px;width:14.20px;height:14.20px;color:#4b5563;stroke-width:1.9;" viewBox="0 0 24 24"><circle cx="12" cy="12" r="10"/><path d="M12 16v-4"/><path d="M12 8h.01"/></svg>
<div class="a" style="left:1349.50px;top:122.00px;width:73.50px;height:29.70px;border:1px solid #e5e7eb;border-radius:6px;box-sizing:border-box;background:#fff"></div>
<svg class="i" style="left:1362.40px;top:130.70px;width:12.50px;height:12.50px;color:#1f2937;stroke-width:1.8;" viewBox="0 0 24 24"><path d="M5 12h14"/><path d="M12 5v14"/></svg>
<div class="t b" style="left:1386.60px;top:130.81px;font-size:11.8px;color:#1f2937;">Add</div>
<div class="t b" style="left:1131.00px;top:171.19px;font-size:14.19px;color:#1f2937;">Triggers</div>
<div class="t" style="left:1131.00px;top:197.29px;font-size:12.65px;color:#374151;">Run on start and app refresh</div>
<svg class="i" style="left:1302.90px;top:197.00px;width:14.20px;height:14.20px;color:#4b5563;stroke-width:1.9;" viewBox="0 0 24 24"><circle cx="12" cy="12" r="10"/><path d="M12 16v-4"/><path d="M12 8h.01"/></svg>
<div class="a" style="left:1395.00px;top:196.60px;width:28.00px;height:16.40px;background:#2563eb;border-radius:9px"></div>
<div class="a" style="left:1408.60px;top:198.20px;width:13.20px;height:13.20px;background:#fff;border-radius:50%"></div>
<div class="t b" style="left:1131.00px;top:231.88px;font-size:11.95px;color:#4b5563;">Events</div>
<div class="a" style="left:1130.90px;top:250.30px;width:44.60px;height:21.30px;border:1px solid #e5e7eb;border-radius:5px;box-sizing:border-box;background:#fff"></div>
<div class="t" style="left:1140.00px;top:254.48px;font-size:12.9px;color:#1f2937;">start</div>
<div class="a" style="left:1184.20px;top:250.30px;width:58.60px;height:21.30px;border:1px solid #e5e7eb;border-radius:5px;box-sizing:border-box;background:#fff"></div>
<div class="t" style="left:1193.00px;top:254.48px;font-size:12.9px;color:#1f2937;">refresh</div>
<div class="a" style="left:1125.00px;top:277.00px;width:297.90px;height:129.60px;border:1px solid #15803d;background:#eef8ef;box-sizing:border-box"></div>
<div class="t b" style="left:1131.00px;top:281.99px;font-size:12.3px;color:#4b5563;">Values watched</div>
<div class="a" style="left:1130.60px;top:300.00px;width:87.00px;height:23.70px;border:1px solid #3b7be6;background:#d1e8ef;border-radius:6px;box-sizing:border-box"></div>
<div class="t" style="left:1140.60px;top:305.38px;font-size:12.9px;color:#1e40af;">b.result</div>
<div class="a" style="left:1191.00px;top:303.20px;width:18.00px;height:17.40px;background:#93c5f5;border-radius:5px"></div>
<svg class="i" style="left:1194.10px;top:306.00px;width:11.80px;height:11.80px;color:#1e40af;stroke-width:2;" viewBox="0 0 24 24"><path d="M18 6 6 18"/><path d="m6 6 12 12"/></svg>
<div class="a" style="left:1130.60px;top:340.00px;width:139.20px;height:23.80px;background:#456072;border-radius:6px"></div>
<svg class="i" style="left:1139.60px;top:345.40px;width:13.40px;height:13.40px;color:#e5e7eb;stroke-width:1.7;" viewBox="0 0 24 24"><path d="M5 12h14"/><path d="M12 5v14"/></svg>
<div class="t b" style="left:1163.20px;top:345.71px;font-size:12.16px;color:#e5e7eb;">Add dependency</div>
<div class="t" style="left:1131.00px;top:382.61px;font-size:14.64px;color:#4b5563;">Quick add:</div>
<div class="a" style="left:1205.80px;top:380.00px;width:72.80px;height:21.00px;border:1px solid #d6e0d8;border-radius:5px;box-sizing:border-box"></div>
<div class="t" style="left:1215.10px;top:385.04px;font-size:12px;color:#374151;">+ctx.email</div>
<div class="a" style="left:1283.00px;top:380.00px;width:73.00px;height:21.00px;border:1px solid #d6e0d8;border-radius:5px;box-sizing:border-box"></div>
<div class="t" style="left:1292.90px;top:385.04px;font-size:12px;color:#374151;">+state.foo</div>
<div class="a" style="left:1122.00px;top:425.80px;width:309.00px;height:1.00px;background:#e5e7eb"></div>
<div class="t b" style="left:1135.00px;top:440.80px;font-size:12.05px;color:#1f2937;">Trigger runnables on success</div>
<svg class="i" style="left:1312.40px;top:439.40px;width:14.20px;height:14.20px;color:#4b5563;stroke-width:1.9;" viewBox="0 0 24 24"><circle cx="12" cy="12" r="10"/><path d="M12 16v-4"/><path d="M12 8h.01"/></svg>
<div class="a" style="left:1134.80px;top:463.20px;width:284.00px;height:91.50px;border:1px solid #e5e7eb;box-sizing:border-box;background:#fff"></div>
<div class="a" style="left:1135.80px;top:464.20px;width:282.00px;height:32.30px;background:#f3f4f6;border-bottom:1px solid #e5e7eb;box-sizing:border-box"></div>
<div class="t" style="left:1144.00px;top:473.19px;font-size:12.77px;color:#4b5563;">Component</div>
<div class="t" style="left:1281.70px;top:473.24px;font-size:12.71px;color:#4b5563;">Recompute</div>
<div class="a" style="left:1143.80px;top:501.70px;width:48.50px;height:19.70px;background:#e0e7ff;border-radius:4px"></div>
<div class="t b" style="left:1153.90px;top:505.44px;font-size:12px;color:#3730a3;">bg_0</div>
<div class="a" style="left:1143.80px;top:530.00px;width:26.20px;height:19.80px;background:#e0e7ff;border-radius:4px"></div>
<div class="t b" style="left:1153.90px;top:533.44px;font-size:12px;color:#3730a3;">c</div>
<div class="a" style="left:1282.00px;top:502.00px;width:28.00px;height:16.00px;background:#d1d5db;border-radius:8px"></div>
<div class="a" style="left:1283.30px;top:503.30px;width:13.40px;height:13.40px;background:#fff;border-radius:50%"></div>
<div class="a" style="left:1282.00px;top:530.40px;width:28.00px;height:16.00px;background:#d1d5db;border-radius:8px"></div>
<div class="a" style="left:1283.30px;top:531.70px;width:13.40px;height:13.40px;background:#fff;border-radius:50%"></div>
</div>
</body></html>
